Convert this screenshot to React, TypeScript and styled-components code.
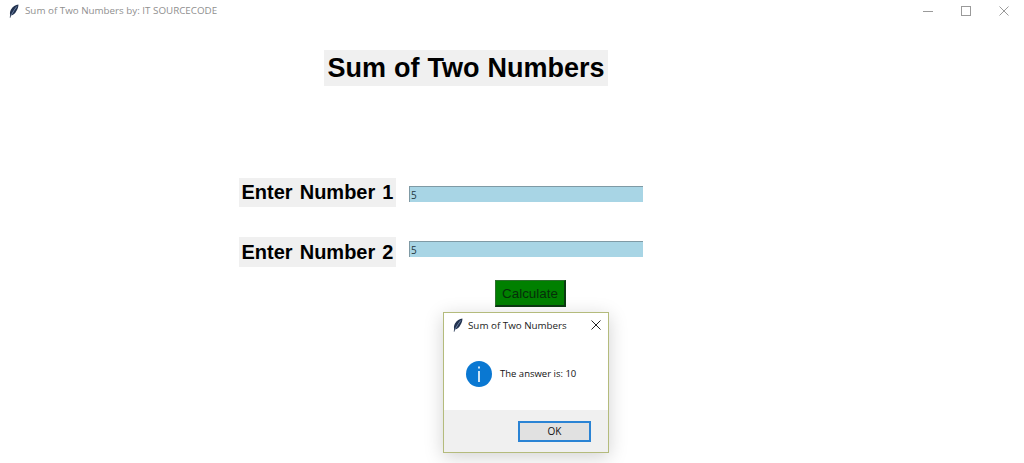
import React from "react";
import styled, { createGlobalStyle } from "styled-components";

const GlobalStyle = createGlobalStyle`
  html, body {
    margin: 0;
    padding: 0;
    background: #ffffff;
    overflow: hidden;
  }
`;

const Window = styled.div`
  position: relative;
  width: 1024px;
  height: 463px;
  overflow: hidden;
  background: #ffffff;
  font-family: "Liberation Sans", Arial, sans-serif;
`;

const TitleBar = styled.div`
  display: flex;
  align-items: center;
  height: 21px;
  padding-left: 9px;
`;

const TitleText = styled.span`
  margin-left: 6px;
  font-family: "Open Sans", sans-serif;
  font-size: 9.8px;
  color: #8f8f8f;
`;

const WindowControls = styled.div`
  display: flex;
  align-items: center;
  gap: 28px;
  margin-left: auto;
  margin-right: 15px;
`;

const Content = styled.main`
  display: flex;
  flex-direction: column;
  align-items: flex-start;
  padding: 29px 0 0 239px;
`;

const Heading = styled.h1`
  margin: 0 0 92px 85px;
  width: 284px;
  height: 36px;
  background: #f0f0f0;
  color: #000000;
  font-size: 27px;
  font-weight: 700;
  line-height: 36px;
  word-spacing: 0.5px;
  text-align: center;
  white-space: nowrap;
`;

const Row = styled.div<{ $gap: number; $inputTop: number }>`
  display: flex;
  align-items: flex-start;
  gap: 13px;
  margin-bottom: ${(p) => p.$gap}px;

  input {
    margin-top: ${(p) => p.$inputTop}px;
  }
`;

const Label = styled.label<{ $height: number }>`
  width: 157px;
  height: ${(p) => p.$height}px;
  background: #f0f0f0;
  color: #000000;
  font-size: 20px;
  font-weight: 700;
  line-height: ${(p) => p.$height}px;
  word-spacing: 1.5px;
  text-align: center;
  white-space: nowrap;
`;

const NumberInput = styled.input`
  box-sizing: border-box;
  width: 234px;
  height: 16px;
  padding: 0 0 0 1px;
  border: 0;
  border-top: 1px solid #7f9aa5;
  border-left: 1px solid #7f9aa5;
  border-radius: 0;
  outline: none;
  background: #a8d5e5;
  color: #24383f;
  font-family: "Open Sans", sans-serif;
  font-size: 10px;
`;

const CalculateButton = styled.button`
  box-sizing: border-box;
  width: 71px;
  height: 27px;
  margin: 0 0 0 256px;
  padding: 0;
  border-style: solid;
  border-width: 1px 2px 2px 1px;
  border-color: #2f6f2f #0b3a12 #0b3a12 #2f6f2f;
  background: #008000;
  color: #062f0a;
  font-family: "Liberation Sans", Arial, sans-serif;
  font-size: 13.4px;
`;

const Dialog = styled.div`
  position: absolute;
  left: 443px;
  top: 312px;
  box-sizing: border-box;
  display: flex;
  flex-direction: column;
  width: 166px;
  height: 141px;
  border: 1px solid #b4bb7c;
  background: #ffffff;
  box-shadow: 0 4px 18px rgba(0, 0, 0, 0.18);
  font-family: "Open Sans", sans-serif;
  color: #111111;
`;

const DialogTitle = styled.div`
  display: flex;
  align-items: center;
  height: 24px;
  padding: 0 7px 0 9px;
  font-size: 9.8px;
  color: #1a1a1a;

  span {
    margin-left: 5px;
  }

  svg:last-child {
    margin-left: auto;
  }
`;

const DialogBody = styled.div`
  flex: 1;
  display: flex;
  align-items: center;
  gap: 8px;
  padding: 0 0 0 22px;
  font-size: 9.5px;
`;

const DialogFooter = styled.div`
  display: flex;
  justify-content: flex-end;
  align-items: center;
  height: 42px;
  padding-right: 17px;
  background: #f0f0f0;
`;

const OkButton = styled.button`
  box-sizing: border-box;
  width: 73px;
  height: 21px;
  padding: 0;
  border: 2px solid #2a83d4;
  border-radius: 0;
  background: #e1e1e1;
  color: #111111;
  font-family: "Open Sans", sans-serif;
  font-size: 10px;
`;

const Feather = () => (
  <svg width="10" height="14" viewBox="0 0 10 14">
    <path d="M9.4.4C6.6.8 3.6 2.6 2 5.4.9 7.4.7 9.6 1.2 11L.7 13.6l.7.1.6-2.2c2.3-.2 4.2-1.9 5.4-4.4C8.7 4.8 9.6 2.4 9.4.4z" fill="#22324f" />
    <path d="M7.8 2.4C5.8 5 4 8 2.4 10.8" stroke="#7f95ba" strokeWidth="0.8" fill="none" />
  </svg>
);

const MinimizeIcon = () => (
  <svg width="10" height="10" viewBox="0 0 10 10">
    <path d="M0 5.5h10" stroke="#9a9a9a" strokeWidth="1" />
  </svg>
);

const MaximizeIcon = () => (
  <svg width="10" height="10" viewBox="0 0 10 10">
    <rect x="0.5" y="0.5" width="9" height="9" fill="none" stroke="#9a9a9a" strokeWidth="1" />
  </svg>
);

const CloseIcon = ({ size, color }: { size: number; color: string }) => (
  <svg width={size} height={size} viewBox="0 0 10 10">
    <path d="M0.5 0.5l9 9M9.5 0.5l-9 9" stroke={color} strokeWidth="1" fill="none" />
  </svg>
);

const InfoIcon = () => (
  <svg width="26" height="26" viewBox="0 0 26 26" style={{ flexShrink: 0 }}>
    <circle cx="13" cy="13" r="13" fill="#0a78d2" />
    <rect x="12.2" y="5.5" width="1.6" height="2" fill="#ffffff" />
    <rect x="12.2" y="10" width="1.6" height="11" fill="#ffffff" />
  </svg>
);

export default function App() {
  return (
    <Window>
      <GlobalStyle />
      <TitleBar>
        <Feather />
        <TitleText>Sum of Two Numbers by: IT SOURCECODE</TitleText>
        <WindowControls>
          <MinimizeIcon />
          <MaximizeIcon />
          <CloseIcon size={10} color="#9a9a9a" />
        </WindowControls>
      </TitleBar>
      <Content>
        <Heading>Sum of Two Numbers</Heading>
        <Row $gap={30} $inputTop={8}>
          <Label $height={29}>Enter Number 1</Label>
          <NumberInput defaultValue="5" />
        </Row>
        <Row $gap={13} $inputTop={4}>
          <Label $height={30}>Enter Number 2</Label>
          <NumberInput defaultValue="5" />
        </Row>
        <CalculateButton>Calculate</CalculateButton>
      </Content>
      <Dialog>
        <DialogTitle>
          <Feather />
          <span>Sum of Two Numbers</span>
          <CloseIcon size={10} color="#222222" />
        </DialogTitle>
        <DialogBody>
          <InfoIcon />
          The answer is: 10
        </DialogBody>
        <DialogFooter>
          <OkButton>OK</OkButton>
        </DialogFooter>
      </Dialog>
    </Window>
  );
}
